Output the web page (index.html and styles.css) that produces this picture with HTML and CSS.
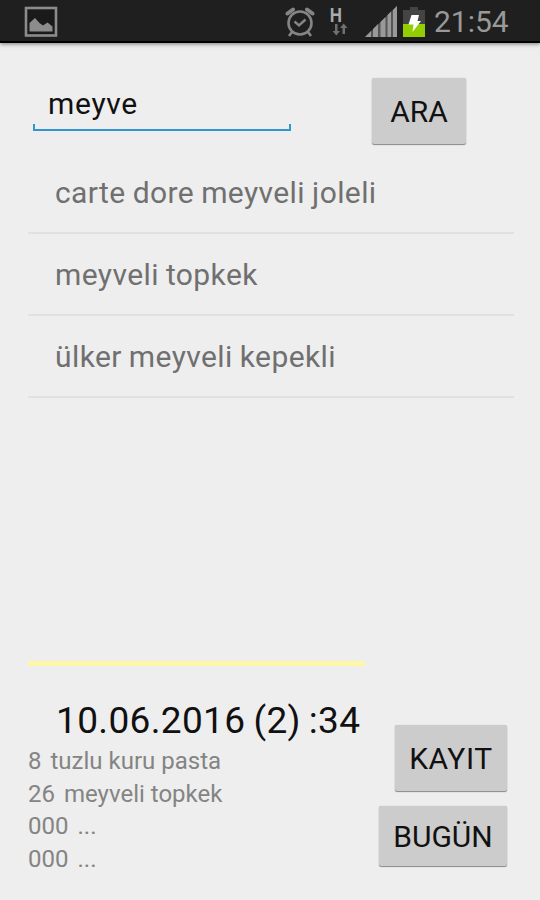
FILE: index.html
```html
<!DOCTYPE html>
<html lang="tr">

<head>
    <meta charset="UTF-8">
    <title>Meyve</title>
    <link rel="stylesheet" href="styles.css">
</head>

<body>

    <header class="status-bar">
        <svg class="icon-picture" width="34" height="32" viewBox="0 0 34 32">
            <rect x="2" y="2" width="30" height="27.5" fill="#1a1a1a" stroke="#8c8c8c" stroke-width="2.6" />
            <path d="M5.500 25.500V17l5.500-5 4.500 5 3.500 2.500 4.500-3 5 4v5z" fill="#8c8c8c" />
        </svg>
        <div class="status-icons">
            <svg class="icon-alarm" width="30" height="30" viewBox="0 0 30 30" fill="none" stroke="#858585">
                <circle cx="15" cy="16" r="11.500" stroke-width="2.600" />
                <path d="M9.500 14.500l4.500 4 6.500-6" stroke-width="2.400" />
                <path d="M7 25l-3 4M23 25l3 4" stroke-width="2.600" />
                <path d="M2.500 6.500L8 2.500M22 2.500l5.500 4" stroke-width="4" stroke-linecap="round" />
            </svg>
            <div class="network">
                <span class="network-type">H</span>
                <svg class="network-arrows" width="16" height="13" viewBox="0 0 16 13" fill="#707070">
                    <path d="M3 1h2.500v7H8l-3.700 4.500L.5 8H3z" />
                    <path d="M10.500 11H13V5h2.500L11.700.5 8 5h2.500z" />
                </svg>
            </div>
            <svg class="icon-signal" width="33" height="31" viewBox="0 0 33 31">
                <path d="M0 31L32 0v31z" fill="#555" />
                <path d="M0 31l6-6v6zM8 31v-8l5-5v13zM15.500 31V16l5-5v20zM22.500 31V9l3.500-3.500V31zM28 31V4l4-4v31z" fill="#999" />
            </svg>
            <svg class="icon-battery" width="22" height="30" viewBox="0 0 22 30">
                <path d="M7 0h8v3h7v27H0V3h7z" fill="#444" />
                <path d="M0 17h22v13H0z" fill="#93cf00" />
                <path d="M8.500 8H16l-1.500 6H18L9.500 25l1-7.500h-5z" fill="#fff" />
            </svg>
            <span class="clock">21:54</span>
        </div>
    </header>

    <main class="screen">
        <div class="search">
            <div class="search-field">
                <span>meyve</span>
                <div class="search-line"></div>
            </div>
            <button class="btn btn-search">ARA</button>
        </div>

        <ul class="results">
            <li>carte dore meyveli joleli</li>
            <li>meyveli topkek</li>
            <li>ülker meyveli kepekli</li>
        </ul>

        <div class="bottom">
            <div class="summary">
                <div class="date">10.06.2016 (2) :34</div>
                <p class="entry"><span class="amount">8</span>tuzlu kuru pasta</p>
                <p class="entry"><span class="amount">26</span>meyveli topkek</p>
                <p class="entry"><span class="amount">000</span>...</p>
                <p class="entry"><span class="amount">000</span>...</p>
            </div>
            <div class="actions">
                <button class="btn btn-save">KAYIT</button>
                <button class="btn btn-today">BUGÜN</button>
            </div>
        </div>
    </main>

</body>

</html>
```
FILE: styles.css
```css
* {
    box-sizing: border-box;
}

body {
    margin: 0;
    width: 540px;
    height: 900px;
    overflow: hidden;
    background: #eee;
    color: #111;
    font-family: Roboto, sans-serif;
}

.status-bar {
    display: flex;
    justify-content: space-between;
    height: 43px;
    padding: 6px 31px 0 24px;
    background: #1f1f1f;
    border-bottom: 2px solid #000;
    box-shadow: 0 1px 4px rgba(0, 0, 0, 0.5);
}

.status-icons {
    display: flex;
    align-items: flex-start;
}

.icon-alarm {
    margin-top: 1px;
}

.network {
    display: flex;
    flex-direction: column;
    width: 20px;
    margin-left: 14px;
}

.network-type {
    height: 17px;
    padding-left: 1px;
    font-family: "Liberation Sans", sans-serif;
    font-size: 20px;
    font-weight: 700;
    line-height: 19px;
    color: #aaa;
    transform: scaleX(0.85);
    transform-origin: left;
}

.network-arrows {
    margin-left: 3px;
}

.icon-signal {
    margin-left: 16px;
}

.icon-battery {
    margin: 1px 9px 0 5px;
}

.clock {
    width: 75px;
    font-size: 30px;
    line-height: 32px;
    color: #999;
}

.screen {
    height: 857px;
    padding: 35px 26px 0 28px;
}

.search {
    display: flex;
    justify-content: space-between;
    height: 73px;
    padding: 0 48px 0 5px;
}

.search-field {
    width: 258px;
    height: 53px;
    font-size: 30px;
    line-height: 51px;
    letter-spacing: 0.7px;
}

.search-field span {
    display: block;
    height: 46px;
    padding-left: 15px;
}

.search-line {
    height: 7px;
    border: 2px solid #2f96cf;
    border-top: 0;
}

.btn {
    padding: 0;
    border: 0;
    border-radius: 2px;
    background: #ccc;
    box-shadow: 0 1px 1px #888, 0 0 1px #bbb;
    color: #111;
    font-family: inherit;
    font-size: 30px;
}

.btn-search {
    width: 94px;
    height: 66px;
}

.results {
    margin: 0;
    padding: 0;
    list-style: none;
}

.results li {
    height: 82px;
    padding-left: 27px;
    border-bottom: 2px solid #e1e1e1;
    font-size: 30px;
    line-height: 82px;
    letter-spacing: 0.4px;
    word-spacing: -0.8px;
    color: #707070;
}

.results li:first-child {
    height: 83px;
    line-height: 84px;
}

.bottom {
    display: flex;
    justify-content: space-between;
    margin-top: 263px;
    padding-right: 7px;
}

.summary {
    width: 337px;
    border-top: 5px solid #fff7a8;
    white-space: nowrap;
}

.date {
    height: 79px;
    padding: 33px 0 0 28px;
    font-size: 37px;
    line-height: 44px;
    letter-spacing: 0.35px;
    word-spacing: -1.5px;
}

.entry {
    margin: 0;
    font-size: 24px;
    line-height: 32.7px;
    color: #848484;
}

.amount {
    margin-right: 9px;
}

.actions {
    display: flex;
    flex-direction: column;
    align-items: flex-end;
    gap: 15px;
    padding-top: 64px;
}

.btn-save {
    width: 112px;
    height: 66px;
    letter-spacing: 0.6px;
}

.btn-today {
    width: 128px;
    height: 60px;
}
```
